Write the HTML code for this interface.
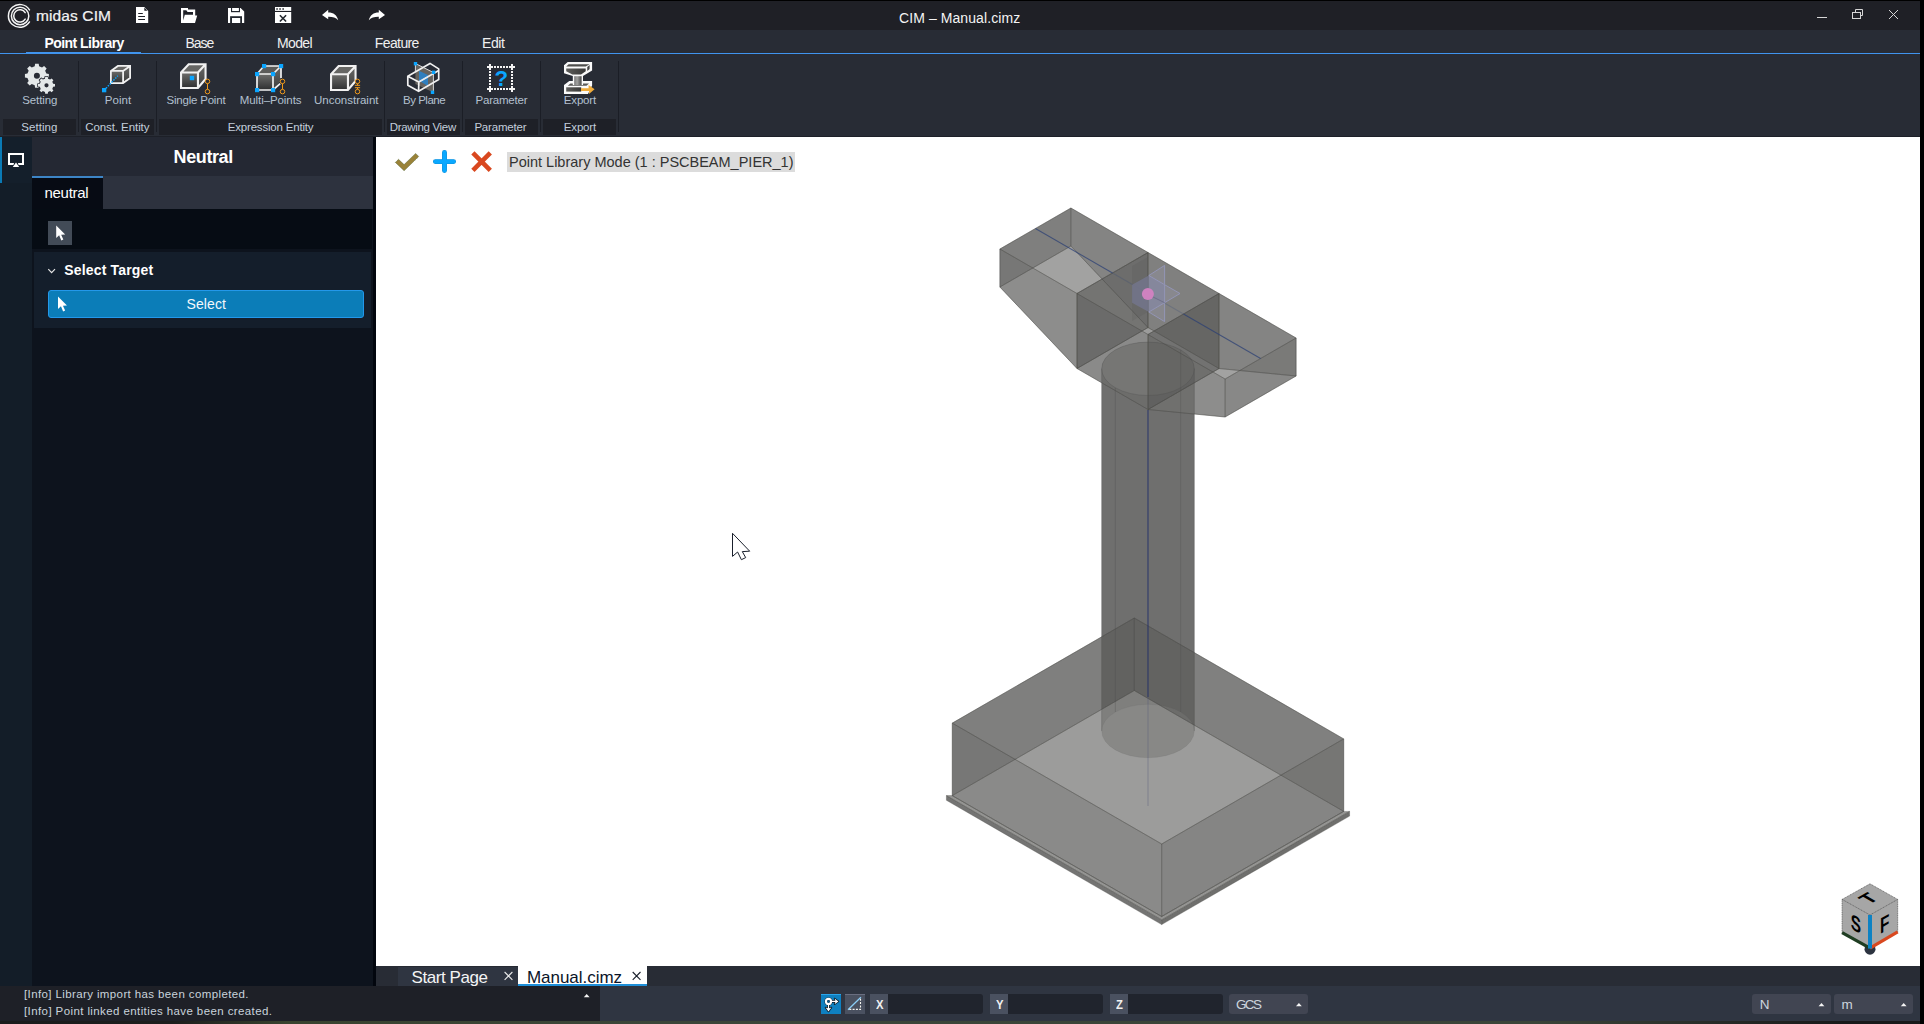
<!DOCTYPE html>
<html lang="en"><head><meta charset="utf-8"><title>CIM - Manual.cimz</title>
<style>
html,body{margin:0;padding:0;background:#000;}
body{width:1924px;height:1024px;position:relative;overflow:hidden;font-family:"Liberation Sans",sans-serif;}
.r{position:absolute;}
.t{position:absolute;white-space:pre;font-family:"Liberation Sans",sans-serif;}
svg.ov{position:absolute;left:0;top:0;}
</style></head><body>
<div class="r" style="left:0px;top:0px;width:1924px;height:1px;background:#000;"></div>
<div class="r" style="left:0px;top:1px;width:1920px;height:29px;background:#1f2026;"></div>
<div class="r" style="left:1920px;top:0px;width:4px;height:1024px;background:#000;"></div>
<span class="t" style="left:36.00px;top:8.00px;font-size:15.5px;line-height:15.5px;color:#f2f2f2;font-weight:400;letter-spacing:0.115px;-webkit-text-stroke:0.22px #f2f2f2;">midas CIM</span>
<span class="t" style="left:899.00px;top:11.00px;font-size:14px;line-height:14px;color:#f4f4f4;font-weight:400;letter-spacing:0.087px;">CIM – Manual.cimz</span>
<div class="r" style="left:0px;top:30px;width:1920px;height:23px;background:#282c35;"></div>
<div class="r" style="left:0px;top:53px;width:1920px;height:1px;background:#4094ee;"></div>
<div class="r" style="left:26px;top:52px;width:115px;height:2px;background:#4094ee;"></div>
<span class="t" style="left:44.40px;top:36.00px;font-size:14px;line-height:14px;color:#ffffff;font-weight:700;letter-spacing:-0.530px;">Point Library</span>
<span class="t" style="left:185.60px;top:36.00px;font-size:14px;line-height:14px;color:#f0f0f0;font-weight:400;letter-spacing:-1.107px;">Base</span>
<span class="t" style="left:276.90px;top:36.00px;font-size:14px;line-height:14px;color:#f0f0f0;font-weight:400;letter-spacing:-0.585px;">Model</span>
<span class="t" style="left:374.80px;top:36.00px;font-size:14px;line-height:14px;color:#f0f0f0;font-weight:400;letter-spacing:-0.608px;">Feature</span>
<span class="t" style="left:481.90px;top:36.00px;font-size:14px;line-height:14px;color:#f0f0f0;font-weight:400;letter-spacing:-0.342px;">Edit</span>
<div class="r" style="left:0px;top:54px;width:1920px;height:83px;background:#282c35;"></div>
<div class="r" style="left:0px;top:136px;width:1920px;height:1px;background:#1d2028;"></div>
<div class="r" style="left:3px;top:119px;width:73px;height:16px;background:#1e2027;"></div>
<div class="r" style="left:81px;top:119px;width:73px;height:16px;background:#1e2027;"></div>
<div class="r" style="left:159px;top:119px;width:223px;height:16px;background:#1e2027;"></div>
<div class="r" style="left:387px;top:119px;width:73px;height:16px;background:#1e2027;"></div>
<div class="r" style="left:465px;top:119px;width:73px;height:16px;background:#1e2027;"></div>
<div class="r" style="left:543px;top:119px;width:73px;height:16px;background:#1e2027;"></div>
<div class="r" style="left:78px;top:61px;width:1px;height:71px;background:#1b1e26;"></div>
<div class="r" style="left:156px;top:61px;width:1px;height:71px;background:#1b1e26;"></div>
<div class="r" style="left:384px;top:61px;width:1px;height:71px;background:#1b1e26;"></div>
<div class="r" style="left:462px;top:61px;width:1px;height:71px;background:#1b1e26;"></div>
<div class="r" style="left:540px;top:61px;width:1px;height:71px;background:#1b1e26;"></div>
<div class="r" style="left:618px;top:61px;width:1px;height:71px;background:#1b1e26;"></div>
<span class="t" style="left:22.20px;top:95.00px;font-size:11.5px;line-height:11.5px;color:#b3c0cf;font-weight:400;letter-spacing:-0.085px;">Setting</span>
<span class="t" style="left:104.80px;top:95.00px;font-size:11.5px;line-height:11.5px;color:#b3c0cf;font-weight:400;letter-spacing:0.045px;">Point</span>
<span class="t" style="left:166.50px;top:95.00px;font-size:11.5px;line-height:11.5px;color:#b3c0cf;font-weight:400;letter-spacing:-0.207px;">Single Point</span>
<span class="t" style="left:239.80px;top:95.00px;font-size:11.5px;line-height:11.5px;color:#b3c0cf;font-weight:400;letter-spacing:-0.086px;">Multi–Points</span>
<span class="t" style="left:314.00px;top:95.00px;font-size:11.5px;line-height:11.5px;color:#b3c0cf;font-weight:400;letter-spacing:-0.006px;">Unconstraint</span>
<span class="t" style="left:403.00px;top:95.00px;font-size:11.5px;line-height:11.5px;color:#b3c0cf;font-weight:400;letter-spacing:-0.490px;">By Plane</span>
<span class="t" style="left:475.60px;top:95.00px;font-size:11.5px;line-height:11.5px;color:#b3c0cf;font-weight:400;letter-spacing:-0.223px;">Parameter</span>
<span class="t" style="left:563.80px;top:95.00px;font-size:11.5px;line-height:11.5px;color:#b3c0cf;font-weight:400;letter-spacing:-0.170px;">Export</span>
<span class="t" style="left:21.20px;top:122.00px;font-size:11.5px;line-height:11.5px;color:#c3cedb;font-weight:400;letter-spacing:0.081px;">Setting</span>
<span class="t" style="left:85.20px;top:122.00px;font-size:11.5px;line-height:11.5px;color:#c3cedb;font-weight:400;letter-spacing:-0.075px;">Const. Entity</span>
<span class="t" style="left:227.80px;top:122.00px;font-size:11.5px;line-height:11.5px;color:#c3cedb;font-weight:400;letter-spacing:-0.197px;">Expression Entity</span>
<span class="t" style="left:389.80px;top:122.00px;font-size:11.5px;line-height:11.5px;color:#c3cedb;font-weight:400;letter-spacing:-0.337px;">Drawing View</span>
<span class="t" style="left:474.40px;top:122.00px;font-size:11.5px;line-height:11.5px;color:#c3cedb;font-weight:400;letter-spacing:-0.198px;">Parameter</span>
<span class="t" style="left:563.80px;top:122.00px;font-size:11.5px;line-height:11.5px;color:#c3cedb;font-weight:400;letter-spacing:-0.170px;">Export</span>
<div class="r" style="left:0px;top:137px;width:2px;height:46px;background:#0a7ab5;"></div>
<div class="r" style="left:2px;top:137px;width:30px;height:46px;background:#141f2b;"></div>
<div class="r" style="left:0px;top:183px;width:32px;height:803px;background:#131d28;"></div>
<div class="r" style="left:32px;top:137px;width:341px;height:39px;background:#242833;"></div>
<div class="r" style="left:32px;top:176px;width:341px;height:33px;background:#2d323e;"></div>
<div class="r" style="left:32px;top:176px;width:71px;height:2px;background:#3d85c6;"></div>
<div class="r" style="left:32px;top:178px;width:71px;height:31px;background:#070b14;"></div>
<div class="r" style="left:32px;top:209px;width:341px;height:777px;background:#0d131d;"></div>
<div class="r" style="left:32px;top:209px;width:340px;height:40px;background:#060c14;"></div>
<div class="r" style="left:34px;top:252px;width:337px;height:76px;background:#141e2b;"></div>
<div class="r" style="left:48px;top:221px;width:24px;height:24px;background:#424b57;"></div>
<div class="r" style="left:373px;top:137px;width:3px;height:849px;background:#02060e;"></div>
<span class="t" style="left:173.60px;top:148.00px;font-size:18px;line-height:18px;color:#ffffff;font-weight:700;letter-spacing:-0.403px;">Neutral</span>
<span class="t" style="left:44.60px;top:185.00px;font-size:15px;line-height:15px;color:#ffffff;font-weight:400;letter-spacing:-0.329px;">neutral</span>
<span class="t" style="left:64.20px;top:263.00px;font-size:14px;line-height:14px;color:#ffffff;font-weight:700;letter-spacing:0.176px;">Select Target</span>
<div class="r" style="left:48px;top:290px;width:316px;height:28px;background:#0b7db8;border:1px solid #2398ea;border-radius:3px;box-sizing:border-box;"></div>
<span class="t" style="left:186.50px;top:297.00px;font-size:14px;line-height:14px;color:#f4f8fb;font-weight:400;letter-spacing:0.116px;">Select</span>
<div class="r" style="left:376px;top:137px;width:1544px;height:829px;background:#ffffff;"></div>
<div class="r" style="left:507px;top:152px;width:288px;height:20px;background:#dcdcdc;"></div>
<span class="t" style="left:509.00px;top:155.00px;font-size:14.5px;line-height:14.5px;color:#333;font-weight:400;letter-spacing:0.000px;">Point Library Mode (1 : PSCBEAM_PIER_1)</span>
<div class="r" style="left:376px;top:966px;width:1544px;height:20px;background:#282c35;"></div>
<div class="r" style="left:398px;top:966px;width:120px;height:20px;background:#2f3541;border-top:1px solid #262a33;box-sizing:border-box;"></div>
<div class="r" style="left:518px;top:966px;width:129px;height:18px;background:#ffffff;"></div>
<div class="r" style="left:518px;top:984px;width:129px;height:2px;background:#1e8fd8;"></div>
<div class="r" style="left:398px;top:966px;width:130px;height:20px;overflow:hidden"><span class="t" style="left:13.50px;top:3.00px;font-size:17px;line-height:17px;color:#f4f4f4;font-weight:400;letter-spacing:-0.425px;">Start Page</span></div>
<span class="t" style="left:527.00px;top:969.00px;font-size:17px;line-height:17px;color:#0a1428;font-weight:400;letter-spacing:-0.042px;">Manual.cimz</span>
<div class="r" style="left:0px;top:986px;width:600px;height:35px;background:#1e2027;"></div>
<div class="r" style="left:600px;top:986px;width:1320px;height:35px;background:#2f3541;"></div>
<div class="r" style="left:0;top:1021px;width:1920px;height:3px;background:linear-gradient(90deg,#1a1c1c 0%,#1c1e1d 9%,#39432f 15%,#3b4639 35%,#3a4438 80%,#2a2f2a 88%,#171919 96%)"></div>
<span class="t" style="left:24.00px;top:989.00px;font-size:11.5px;line-height:11.5px;color:#c9d3dc;font-weight:400;letter-spacing:0.387px;">[Info] Library import has been completed.</span>
<span class="t" style="left:24.00px;top:1006.00px;font-size:11.5px;line-height:11.5px;color:#c9d3dc;font-weight:400;letter-spacing:0.402px;">[Info] Point linked entities have been created.</span>
<div class="r" style="left:821px;top:994px;width:20px;height:20px;background:#0f80c0;border-top:1px solid #2aa5ea;box-sizing:border-box;"></div>
<div class="r" style="left:845px;top:994px;width:20px;height:20px;background:#4a5160;border-top:1px solid #6a6e80;box-sizing:border-box;"></div>
<div class="r" style="left:870px;top:994px;width:113px;height:20px;background:#20242d;border-radius:3px;"></div>
<div class="r" style="left:870px;top:994px;width:18px;height:20px;background:#4a5160;"></div>
<div class="r" style="left:990px;top:994px;width:113px;height:20px;background:#20242d;border-radius:3px;"></div>
<div class="r" style="left:990px;top:994px;width:18px;height:20px;background:#4a5160;"></div>
<div class="r" style="left:1110px;top:994px;width:113px;height:20px;background:#20242d;border-radius:3px;"></div>
<div class="r" style="left:1110px;top:994px;width:18px;height:20px;background:#4a5160;"></div>
<span class="t" style="left:875.80px;top:999.00px;font-size:12.5px;line-height:12.5px;color:#f0f0f0;font-weight:700;letter-spacing:0.000px;transform:scaleX(.9);transform-origin:left top;">X</span>
<span class="t" style="left:995.80px;top:999.00px;font-size:12.5px;line-height:12.5px;color:#f0f0f0;font-weight:700;letter-spacing:0.000px;transform:scaleX(.9);transform-origin:left top;">Y</span>
<span class="t" style="left:1116.20px;top:999.00px;font-size:12.5px;line-height:12.5px;color:#f0f0f0;font-weight:700;letter-spacing:0.000px;transform:scaleX(.9);transform-origin:left top;">Z</span>
<div class="r" style="left:1229px;top:994px;width:79px;height:20px;background:#414552;border-radius:3px;"></div>
<span class="t" style="left:1236.00px;top:998.00px;font-size:13.5px;line-height:13.5px;color:#cdd5de;font-weight:400;letter-spacing:-1.633px;">GCS</span>
<div class="r" style="left:1752px;top:994px;width:79px;height:20px;background:#414552;border-radius:3px;"></div>
<div class="r" style="left:1834px;top:994px;width:79px;height:20px;background:#414552;border-radius:3px;"></div>
<span class="t" style="left:1759.80px;top:998.00px;font-size:13.5px;line-height:13.5px;color:#cdd5de;font-weight:400;letter-spacing:0.000px;">N</span>
<span class="t" style="left:1841.50px;top:998.00px;font-size:13.5px;line-height:13.5px;color:#cdd5de;font-weight:400;letter-spacing:0.000px;">m</span>
<svg class="ov" width="1924" height="1024" viewBox="0 0 1924 1024">
<path d="M1101.7,368.8A46.3,26.7 0 0 1 1194.3,368.8V731A46.3,26.7 0 0 0 1101.7,731Z" fill="#4a4a48" fill-opacity="0.55"/><path d="M1101.7,368.8A46.3,26.7 0 0 0 1194.3,368.8V731A46.3,26.7 0 0 1 1101.7,731Z" fill="#4a4a48" fill-opacity="0.55"/>
<ellipse cx="1148" cy="368.8" rx="46.3" ry="26.7" fill="#9e9e9c" fill-opacity="0.55"/>
<path d="M952.3,723.1L1134.3,618.0L1343.7,738.9L1161.7,844.0Z" fill="#848482" fill-opacity="0.55"/>
<path d="M952.3,795.6L1134.3,690.5L1343.7,811.4L1161.7,916.5Z" fill="#848482" fill-opacity="0.55"/>
<path d="M1161.7,844.0L952.3,723.1L952.3,795.6L1161.7,916.5Z" fill="#636361" fill-opacity="0.55"/>
<path d="M1343.7,738.9L1161.7,844.0L1161.7,916.5L1343.7,811.4Z" fill="#5a5a58" fill-opacity="0.55"/>
<path d="M952.3,723.1L1134.3,618.0L1134.3,690.5L952.3,795.6Z" fill="#4f4f4d" fill-opacity="0.55"/>
<path d="M1134.3,618.0L1343.7,738.9L1343.7,811.4L1134.3,690.5Z" fill="#50504e" fill-opacity="0.55"/>
<path d="M946.4,795.6L1161.7,919.9L1161.7,924.6L946.4,800.3Z" fill="#5c5c5a" fill-opacity="0.85"/>
<path d="M1161.7,919.9L1349.6,811.4L1349.6,816.1L1161.7,924.6Z" fill="#565654" fill-opacity="0.85"/>
<path d="M946.4,795.6L952.3,795.6L1161.7,916.5L1343.7,811.4L1349.6,811.4L1161.7,919.9Z" fill="#70706e" fill-opacity="0.75"/>
<path d="M999.9,249.0L1070.9,208.0L1148.0,252.5L1077.0,293.5Z" fill="#848482" fill-opacity="0.55"/>
<path d="M999.9,287.0L1070.9,246.0L1148.0,327.5L1077.0,368.5Z" fill="#8e8e8c" fill-opacity="0.55"/>
<path d="M1077.0,293.5L999.9,249.0L999.9,287.0L1077.0,368.5Z" fill="#636361" fill-opacity="0.55"/>
<path d="M999.9,249.0L1070.9,208.0L1070.9,246.0L999.9,287.0Z" fill="#4f4f4d" fill-opacity="0.55"/>
<path d="M1070.9,208.0L1148.0,252.5L1148.0,327.5L1070.9,246.0Z" fill="#585856" fill-opacity="0.55"/>
<path d="M1225.1,379.0L1296.1,338.0L1219.0,293.5L1148.0,334.5Z" fill="#848482" fill-opacity="0.55"/>
<path d="M1225.1,417.0L1296.1,376.0L1219.0,368.5L1148.0,409.5Z" fill="#8e8e8c" fill-opacity="0.55"/>
<path d="M1148.0,334.5L1225.1,379.0L1225.1,417.0L1148.0,409.5Z" fill="#636361" fill-opacity="0.55"/>
<path d="M1225.1,379.0L1296.1,338.0L1296.1,376.0L1225.1,417.0Z" fill="#5a5a58" fill-opacity="0.55"/>
<path d="M1296.1,338.0L1219.0,293.5L1219.0,368.5L1296.1,376.0Z" fill="#585856" fill-opacity="0.55"/>
<path d="M1077.0,293.5L1148.0,252.5L1219.0,293.5L1148.0,334.5Z" fill="#848482" fill-opacity="0.55"/>
<path d="M1077.0,368.5L1148.0,327.5L1219.0,368.5L1148.0,409.5Z" fill="#848482" fill-opacity="0.55"/>
<path d="M1148.0,334.5L1077.0,293.5L1077.0,368.5L1148.0,409.5Z" fill="#636361" fill-opacity="0.55"/>
<path d="M1219.0,293.5L1148.0,334.5L1148.0,409.5L1219.0,368.5Z" fill="#50504e" fill-opacity="0.55"/>
<path d="M1077.0,293.5L1148.0,252.5L1148.0,327.5L1077.0,368.5Z" fill="#50504e" fill-opacity="0.55"/>
<path d="M1148.0,252.5L1219.0,293.5L1219.0,368.5L1148.0,327.5Z" fill="#50504e" fill-opacity="0.55"/>
<path d="M952.3,723.1L1134.3,618.0L1343.7,738.9L1161.7,844.0ZM952.3,795.6L1134.3,690.5L1343.7,811.4L1161.7,916.5ZM1161.7,844.0L952.3,723.1L952.3,795.6L1161.7,916.5ZM1343.7,738.9L1161.7,844.0L1161.7,916.5L1343.7,811.4ZM952.3,723.1L1134.3,618.0L1134.3,690.5L952.3,795.6ZM1134.3,618.0L1343.7,738.9L1343.7,811.4L1134.3,690.5ZM946.4,795.6L1161.7,919.9L1161.7,924.6L946.4,800.3ZM1161.7,919.9L1349.6,811.4L1349.6,816.1L1161.7,924.6ZM946.4,795.6L952.3,795.6L1161.7,916.5L1343.7,811.4L1349.6,811.4L1161.7,919.9ZM999.9,249.0L1070.9,208.0L1148.0,252.5L1077.0,293.5ZM999.9,287.0L1070.9,246.0L1148.0,327.5L1077.0,368.5ZM1077.0,293.5L999.9,249.0L999.9,287.0L1077.0,368.5ZM999.9,249.0L1070.9,208.0L1070.9,246.0L999.9,287.0ZM1070.9,208.0L1148.0,252.5L1148.0,327.5L1070.9,246.0ZM1225.1,379.0L1296.1,338.0L1219.0,293.5L1148.0,334.5ZM1225.1,417.0L1296.1,376.0L1219.0,368.5L1148.0,409.5ZM1148.0,334.5L1225.1,379.0L1225.1,417.0L1148.0,409.5ZM1225.1,379.0L1296.1,338.0L1296.1,376.0L1225.1,417.0ZM1296.1,338.0L1219.0,293.5L1219.0,368.5L1296.1,376.0ZM1077.0,293.5L1148.0,252.5L1219.0,293.5L1148.0,334.5ZM1077.0,368.5L1148.0,327.5L1219.0,368.5L1148.0,409.5ZM1148.0,334.5L1077.0,293.5L1077.0,368.5L1148.0,409.5ZM1219.0,293.5L1148.0,334.5L1148.0,409.5L1219.0,368.5ZM1077.0,293.5L1148.0,252.5L1148.0,327.5L1077.0,368.5ZM1148.0,252.5L1219.0,293.5L1219.0,368.5L1148.0,327.5Z" fill="none" stroke="#4a4a48" stroke-opacity="0.40" stroke-width="0.8"/>
<g fill="none" stroke="#4a4a48" stroke-opacity="0.36" stroke-width="0.8"><ellipse cx="1148" cy="368.8" rx="46.3" ry="26.7"/><ellipse cx="1148" cy="731" rx="46.3" ry="26.7" stroke-opacity="0.12"/><path d="M1101.7,368.8V731M1194.3,368.8V731M1115.3,387.8V712M1180.7,349.8V712"/></g>
<path d="M1035.4,228.5L1112.5,273.0" stroke="#2a3e74" stroke-opacity="0.72" stroke-width="1.05"/>
<path d="M1112.5,273.0L1183.5,314.0" stroke="#2a3e74" stroke-opacity="0.22" stroke-width="1.05"/>
<path d="M1183.5,314.0L1260.6,358.5" stroke="#2a3e74" stroke-opacity="0.72" stroke-width="1.05"/>
<path d="M1148,410V697" stroke="#1c2a6a" stroke-opacity="0.8" stroke-width="1.05"/><path d="M1148,697V806" stroke="#4a5078" stroke-opacity="0.38" stroke-width="0.9"/>
<path d="M1132,266L1148,257V312L1132,321Z" fill="#555" fill-opacity="0.18"/>
<path d="M1132.1,284.7L1148.8,275.5V312L1132.1,302.7Z" fill="#73758c" fill-opacity="0.85"/><path d="M1148.8,275.5L1164.6,284.7V302.7L1148.8,312Z" fill="#8587a0" fill-opacity="0.9"/>
<g fill="#a4a6c4" fill-opacity="0.22" stroke="#9496ba" stroke-width="0.9"><path d="M1148.8,275.5L1164.6,265.4V284.7Z"/><path d="M1164.6,284.7L1180,293.5L1164.6,302.7Z"/><path d="M1148.8,312L1164.6,302.7V321.6Z"/></g>
<path d="M1153,297L1164.6,302.7" stroke="#6c6e86" stroke-width="0.9"/>
<circle cx="1147.9" cy="293.9" r="6" fill="#cf82c0"/>
<circle cx="1870" cy="949.2" r="5.5" fill="#2c3340"/>
<path d="M1870,883.8L1897.7,899.4V931.8L1870,948.2L1842.1,932.6V899.4Z" fill="#a6a6a6"/>
<path d="M1842.1,899.4L1870,915L1897.7,899.4M1842.1,899.4L1870,883.8L1897.7,899.4V931.8M1842.1,899.4V932.6" fill="none" stroke="#555" stroke-width="0.7" stroke-dasharray="1.2 0.6"/>
<path d="M1842.1,932.6L1870,948.2" stroke="#1f3d22" stroke-width="3.2"/><path d="M1897.7,931.8L1870,948.2" stroke="#d9481f" stroke-width="3.2"/><path d="M1870,915V948.6" stroke="#0d82c4" stroke-width="4"/>
<text transform="matrix(0.7,0.392,0,1,1855.9,924.0)" x="0" y="0" text-anchor="middle" font-family="Liberation Sans,sans-serif" font-weight="700" font-size="22" fill="#000" dy="7.4">S</text>
<text transform="matrix(0.7,-0.392,0,1,1884.6,923.8)" x="0" y="0" text-anchor="middle" font-family="Liberation Sans,sans-serif" font-weight="700" font-size="22" fill="#000" dy="7.6">F</text>
<text transform="matrix(0.82,-0.47,0.82,0.47,1868.3,898.3)" x="0" y="0" text-anchor="middle" font-family="Liberation Sans,sans-serif" font-weight="700" font-size="21" fill="#000" dy="7.4">T</text>
<defs>
<linearGradient id="cg" x1="0" y1="0" x2="0" y2="1"><stop offset="0" stop-color="#6e6e6c"/><stop offset="1" stop-color="#2e2f30"/></linearGradient>
<linearGradient id="cg2" x1="0" y1="0" x2="0" y2="1"><stop offset="0" stop-color="#6a6a68"/><stop offset="1" stop-color="#3c3c3c"/></linearGradient>
<linearGradient id="colg" x1="0" y1="0" x2="1" y2="0"><stop offset="0" stop-color="#777"/><stop offset="0.4" stop-color="#a2a2a0"/><stop offset="1" stop-color="#4a4a4a"/></linearGradient>
<linearGradient id="capg" x1="0" y1="0" x2="1" y2="0"><stop offset="0" stop-color="#5e5e5c"/><stop offset="0.5" stop-color="#4a4a48"/><stop offset="1" stop-color="#383838"/></linearGradient>
</defs><g fill="none" stroke="#f4f4f4" stroke-width="1.5" stroke-linecap="round"><path d="M29.47,21.94A11.4,11.4 0 1 1 29.47,9.86"/><circle cx="20.1" cy="15.95" r="8.7"/><path d="M25.17,19.07A6.15,6.15 0 1 1 25.17,12.73"/></g>
<path d="M136,7H144.3L148.2,10.9V23H136Z" fill="#ffffff"/><path d="M144.3,7.6V10.8H147.4Z" fill="#1e2027"/><path d="M138.2,13.5H142.8M138.2,16.5H145M138.2,19.5H145" stroke="#1e2027" stroke-width="1.1" fill="none"/>
<path d="M181,8H188V9.5H195.2V15.5H197.2L195,23H181Z" fill="#ffffff"/><path d="M183.2,10.2H186.3L187.6,12H193V14.7H184.8L183.2,20.5Z" fill="#1e2027"/>
<path d="M228,8H240.6L244.2,11.6V23H228Z" fill="#ffffff"/><path d="M231,8H240V12.2H231Z" fill="#23272e"/><path d="M232.1,8H238.9V11H232.1Z" fill="#ffffff"/><path d="M230.1,16.2H242V23H230.1Z" fill="#23272e"/><path d="M232,18H240.2V23H232Z" fill="#ffffff"/>
<path d="M275,7H291.2V10.9H275Z" fill="#ffffff"/><path d="M275,12H291.2V23H275Z" fill="#ffffff"/><path d="M276.3,8.3h1.5v1.5h-1.5zM279.3,8.3h1.5v1.5h-1.5zM282.4,8.3h1.5v1.5h-1.5z" fill="#1e2027"/><path d="M279.9,15.3L286.1,21.5M286.1,15.3L279.9,21.5" stroke="#23272e" stroke-width="1.6" fill="none"/>
<path d="M322,14.9L328.2,9.7V12.4C333.5,12.4 337,15 338.2,20.2C335.5,17.3 332.5,16.6 328.2,16.7V19.3Z" fill="#ffffff"/>
<path d="M385,14.9L378.8,9.7V12.4C373.5,12.4 370,15 368.8,20.2C371.5,17.3 374.5,16.6 378.8,16.7V19.3Z" fill="#ffffff"/>
<g stroke="#d6d6d6" stroke-width="1" fill="none"><path d="M1817,17.5H1827"/><rect x="1852.5" y="12.5" width="8" height="6"/><path d="M1855.5,12V9.5H1862.5V15.5H1861"/><path d="M1889,10L1898,19M1898,10L1889,19"/></g>
<path d="M34.71,66.35L35.10,63.83L38.70,63.83L39.09,66.35L42.03,67.57L44.09,66.07L46.63,68.61L45.13,70.67L46.35,73.61L48.87,74.00L48.87,77.60L46.35,77.99L45.13,80.93L46.63,82.99L44.09,85.53L42.03,84.03L39.09,85.25L38.70,87.77L35.10,87.77L34.71,85.25L31.77,84.03L29.71,85.53L27.17,82.99L28.67,80.93L27.45,77.99L24.93,77.60L24.93,74.00L27.45,73.61L28.67,70.67L27.17,68.61L29.71,66.07L31.77,67.57ZM39.9,75.8A3.0,3.0 0 1 0 33.9,75.8A3.0,3.0 0 1 0 39.9,75.8Z" fill="#e4e8e9" fill-rule="evenodd" stroke-linejoin="round"/>
<circle cx="46.5" cy="85.3" r="7.6" fill="#282b35"/>
<path d="M44.96,78.68L45.22,76.80L47.78,76.80L48.04,78.68L50.10,79.53L51.61,78.38L53.42,80.19L52.27,81.70L53.12,83.76L55.00,84.02L55.00,86.58L53.12,86.84L52.27,88.90L53.42,90.41L51.61,92.22L50.10,91.07L48.04,91.92L47.78,93.80L45.22,93.80L44.96,91.92L42.90,91.07L41.39,92.22L39.58,90.41L40.73,88.90L39.88,86.84L38.00,86.58L38.00,84.02L39.88,83.76L40.73,81.70L39.58,80.19L41.39,78.38L42.90,79.53ZM48.6,85.3A2.1,2.1 0 1 0 44.4,85.3A2.1,2.1 0 1 0 48.6,85.3Z" fill="#e4e8e9" fill-rule="evenodd" stroke-linejoin="round" stroke="#282b35" stroke-width="1.6" paint-order="stroke"/>
<path d="M110.9,70.9L117.9,65.9H130.1V78.1L123.1,83.1H110.9Z" fill="#5e5e5c"/><path d="M110.9,70.9L117.9,65.9H130.1L123.1,70.9Z" fill="#666664"/><path d="M123.1,70.9L130.1,65.9V78.1L123.1,83.1Z" fill="url(#cg2)"/><rect x="110.9" y="70.9" width="12.199999999999989" height="12.199999999999989" fill="url(#cg)"/><path d="M110.9,70.9L117.9,65.9H130.1V78.1L123.1,83.1H110.9ZM110.9,70.9H123.1V83.1M123.1,70.9L130.1,65.9" fill="none" stroke="#f1f1f1" stroke-width="1.8" stroke-linejoin="miter"/>
<path d="M106,88.3L117.8,75.8" stroke="#0aa5ff" stroke-width="1.5" stroke-dasharray="1.5 1.2" fill="none"/><rect x="102" y="88" width="4.3" height="4.3" fill="#0aa5ff"/>
<path d="M181.05,72.45L188.65,64.25H205.54999999999998V79L197.95,87.95H181.05Z" fill="#5e5e5c"/><path d="M181.05,72.45L188.65,64.25H205.54999999999998L197.95,72.45Z" fill="#666664"/><path d="M197.95,72.45L205.54999999999998,64.25V79L197.95,87.95Z" fill="url(#cg2)"/><rect x="181.05" y="72.45" width="16.899999999999977" height="15.5" fill="url(#cg)"/><path d="M181.05,72.45L188.65,64.25H205.54999999999998V79L197.95,87.95H181.05ZM181.05,72.45H197.95V87.95M197.95,72.45L205.54999999999998,64.25" fill="none" stroke="#f1f1f1" stroke-width="2.1" stroke-linejoin="miter"/>
<rect x="189.8" y="75.8" width="4.4" height="4.4" fill="#0aa5ff"/>
<g fill="#282b35" stroke="#f09a1a" stroke-width="1.0"><path d="M207.5,81.4V91.6" fill="none"/><circle cx="207.5" cy="81.4" r="2.25"/><circle cx="207.5" cy="91.6" r="2.25"/></g>
<path d="M257,74L264,66H281V80L273,90H257Z" fill="#5c5c5a"/><path d="M257,74H273V90H257Z" fill="url(#cg)"/><path d="M273,74L281,66V80L273,90Z" fill="url(#cg2)"/>
<path d="M257,74H273V90H257ZM257,74L264,66H281V78M273,74L281,66M273,90L280.2,83.6" fill="none" stroke="#f1f1f1" stroke-width="1.7"/>
<rect x="255" y="72" width="4.2" height="4.2" fill="#0aa5ff"/>
<rect x="271" y="72" width="4.2" height="4.2" fill="#0aa5ff"/>
<rect x="255" y="88" width="4.2" height="4.2" fill="#0aa5ff"/>
<rect x="271" y="88" width="4.2" height="4.2" fill="#0aa5ff"/>
<rect x="262" y="64" width="4.2" height="4.2" fill="#0aa5ff"/>
<rect x="279" y="64" width="4.2" height="4.2" fill="#0aa5ff"/>
<g fill="#282b35" stroke="#f09a1a" stroke-width="1.0"><path d="M282.5,81.4V91.6" fill="none"/><circle cx="282.5" cy="81.4" r="2.25"/><circle cx="282.5" cy="91.6" r="2.25"/></g>
<path d="M331.05,74.25L338.65000000000003,66.05H355.55V81L347.95,89.95H331.05Z" fill="#5e5e5c"/><path d="M331.05,74.25L338.65000000000003,66.05H355.55L347.95,74.25Z" fill="#666664"/><path d="M347.95,74.25L355.55,66.05V81L347.95,89.95Z" fill="url(#cg2)"/><rect x="331.05" y="74.25" width="16.899999999999977" height="15.700000000000003" fill="url(#cg)"/><path d="M331.05,74.25L338.65000000000003,66.05H355.55V81L347.95,89.95H331.05ZM331.05,74.25H347.95V89.95M347.95,74.25L355.55,66.05" fill="none" stroke="#f1f1f1" stroke-width="2.1" stroke-linejoin="miter"/>
<g fill="#282b35" stroke="#f09a1a" stroke-width="1.0"><path d="M357.5,83.60000000000001V85.30000000000001M357.5,89.39999999999999V87.69999999999999M354.9,85.30000000000001H360.1M354.9,87.69999999999999H360.1" fill="none"/><circle cx="357.5" cy="81.4" r="2.25"/><circle cx="357.5" cy="91.6" r="2.25"/></g>
<path d="M415.4,63.5L433.4,72.5V92.4L415.4,84Z" fill="#6b6862" fill-opacity="0.92"/>
<path d="M419,70.8L428,74.9V86L419,80.7Z" fill="#2f7fbf"/>
<path d="M407.8,76.2L430,63.4L438.7,68.9V79.6L418.6,91.3L407.8,85.3ZM407.8,76.2L418.8,82L438.7,70.5M418.8,82L418.6,91.3" fill="none" stroke="#f1f1f1" stroke-width="1.7" stroke-linejoin="round"/>
<path d="M415.4,63.5L433.4,72.5V92.4M415.4,63.5V72" fill="none" stroke="#e8e8e8" stroke-width="0.9"/>
<path d="M418.8,82L428.5,76.4" stroke="#dfe9f2" stroke-width="0.9"/>
<rect x="413.8" y="62" width="3.4" height="3.4" fill="#0aa5ff"/>
<rect x="431.9" y="70.6" width="3.4" height="3.4" fill="#0aa5ff"/>
<rect x="430.8" y="90.6" width="3.4" height="3.4" fill="#0aa5ff"/>
<path d="M487,66h6v2h-6zM489,64h2v6h-2zM487,88h6v2h-6zM489,86h2v6h-2zM509,66h6v2h-6zM511,64h2v6h-2zM509,88h6v2h-6zM511,86h2v6h-2zM494,66h2v2h-2zM494,88h2v2h-2zM497,66h2v2h-2zM497,88h2v2h-2zM500,66h2v2h-2zM500,88h2v2h-2zM503,66h2v2h-2zM503,88h2v2h-2zM506,66h2v2h-2zM506,88h2v2h-2zM489,71h2v2h-2zM511,71h2v2h-2zM489,74h2v2h-2zM511,74h2v2h-2zM489,77h2v2h-2zM511,77h2v2h-2zM489,80h2v2h-2zM511,80h2v2h-2zM489,83h2v2h-2zM511,83h2v2h-2z" fill="#f4f4f4"/>
<text x="501.4" y="86.1" font-family="Liberation Sans,sans-serif" font-weight="700" font-size="22.3" text-anchor="middle" fill="#0aa5ff">?</text>
<path d="M567.7,61.9H592.1V70.5L583,76V80.9H592.1V85.5L588,93.9H564V85L569.3,80.9H572.8V76L564,73.2V65.2Z" fill="#fafafa"/>
<path d="M566.2,66.4L568.6,64.25H589.6L585.7,66.4Z" fill="#4e4e4c"/><path d="M566.2,68.4H585.7V71.3L581,74.4H572.4L566.2,71.3Z" fill="url(#capg)"/><path d="M587.25,67L589.6,65V69L587.25,70.9Z" fill="#444"/>
<rect x="574.2" y="76.2" width="7.4" height="8.9" fill="url(#colg)"/><path d="M567.8,85.8L570.4,83.4H572.8V85.1H583V83.4H589L586.5,85.8Z" fill="#5a5a58"/><rect x="566.2" y="87.3" width="15" height="4.3" fill="url(#capg)"/>
<path d="M581,88.2H588.6V85L594.6,89.3L589,93.9V90.9H581Z" fill="#f0ac3c"/>
<path d="M8,153H24V165H18.6L17.9,163H22V155H10V163H14.1L13.4,165H8Z" fill="#fff"/><path d="M16,162.4L19.2,167H12.8Z" fill="#fff"/>
<path d="M56.20,225.60L56.20,238.00L59.15,235.37L61.32,240.48L63.33,239.55L61.16,234.75L65.19,234.59Z" fill="#fff"/>
<path d="M58.00,296.50L58.00,308.90L60.95,306.26L63.12,311.38L65.13,310.45L62.96,305.64L66.99,305.49Z" fill="#fff"/>
<path d="M48.3,269.2L51.6,272.6L55,269.2" fill="none" stroke="#e6e6e6" stroke-width="1.2"/>
<path d="M395.4,162.4L398.5,159.3L404.1,164.6L415.6,153.4L418.75,156.5L404.1,170.8Z" fill="#9a8238" stroke="#3f5a2a" stroke-width="0.6" stroke-dasharray="0.9 0.5"/>
<path d="M444.5,152.4V170.6M435.4,161.6H453.6" stroke="#0b90dc" stroke-width="4.9" stroke-linecap="round" fill="none"/><path d="M444.5,152.4V170.6M435.4,161.6H453.6" stroke="#0aa8ff" stroke-width="3.7" stroke-linecap="round" fill="none"/>
<path d="M472.9,152.9L490.3,170.3M490.3,152.9L472.9,170.3" stroke="#d9481f" stroke-width="4.6" fill="none"/>
<path d="M732.5,533.3V556.4L737.6,552L741.4,559.7L745.7,557.6L742.3,551.6L749.7,551.2Z" fill="#fff" stroke="#1a202c" stroke-width="1" stroke-linejoin="round"/>
<path d="M504.6,972L512.4,979.8M512.4,972L504.6,979.8" stroke="#e8e8e8" stroke-width="1.1" fill="none"/>
<path d="M632.7,972L640.5,979.8M640.5,972L632.7,979.8" stroke="#1a202c" stroke-width="1.1" fill="none"/>
<path d="M583.8,997.3L586.6999999999999,994L589.5999999999999,997.3Z" fill="#f4f4f4"/>
<path d="M1296,1006.3L1298.9,1003L1301.8,1006.3Z" fill="#f4f4f4"/>
<path d="M1818.6,1006.3L1821.5,1003L1824.3999999999999,1006.3Z" fill="#f4f4f4"/>
<path d="M1900.8,1006.3L1903.7,1003L1906.6,1006.3Z" fill="#f4f4f4"/>
<g stroke="#0b1a26" stroke-width="1.6" stroke-linejoin="round" fill="#0b1a26"><circle cx="828.5" cy="1001.4" r="3.2"/><path d="M830.8,1000.8H835.4L834.6,998.6L838.4,1001.4L834.6,1004.2L835.4,1002H830.8Z"/><path d="M827.9,1003.8V1008.3L825.6,1007.5L828.5,1011.4L831.4,1007.5L829.1,1008.3V1003.8Z"/></g>
<g fill="#fff"><path d="M830.8,1000.8H835.4L834.6,998.6L838.4,1001.4L834.6,1004.2L835.4,1002H830.8Z"/><path d="M827.9,1003.8V1008.3L825.6,1007.5L828.5,1011.4L831.4,1007.5L829.1,1008.3V1003.8Z"/></g><circle cx="828.5" cy="1001.4" r="2.5" fill="none" stroke="#fff" stroke-width="2.2"/><circle cx="828.5" cy="1001.4" r="1.25" fill="#0c5c90"/>
<path d="M848,1009.8L860.9,997.3" stroke="#8ccff8" stroke-width="1.3" fill="none"/><path d="M849.3,1009.4H860.5V998.3" stroke="#f4f4f0" stroke-width="1.1" stroke-dasharray="2 1.3" fill="none"/>
</svg>
</body></html>
